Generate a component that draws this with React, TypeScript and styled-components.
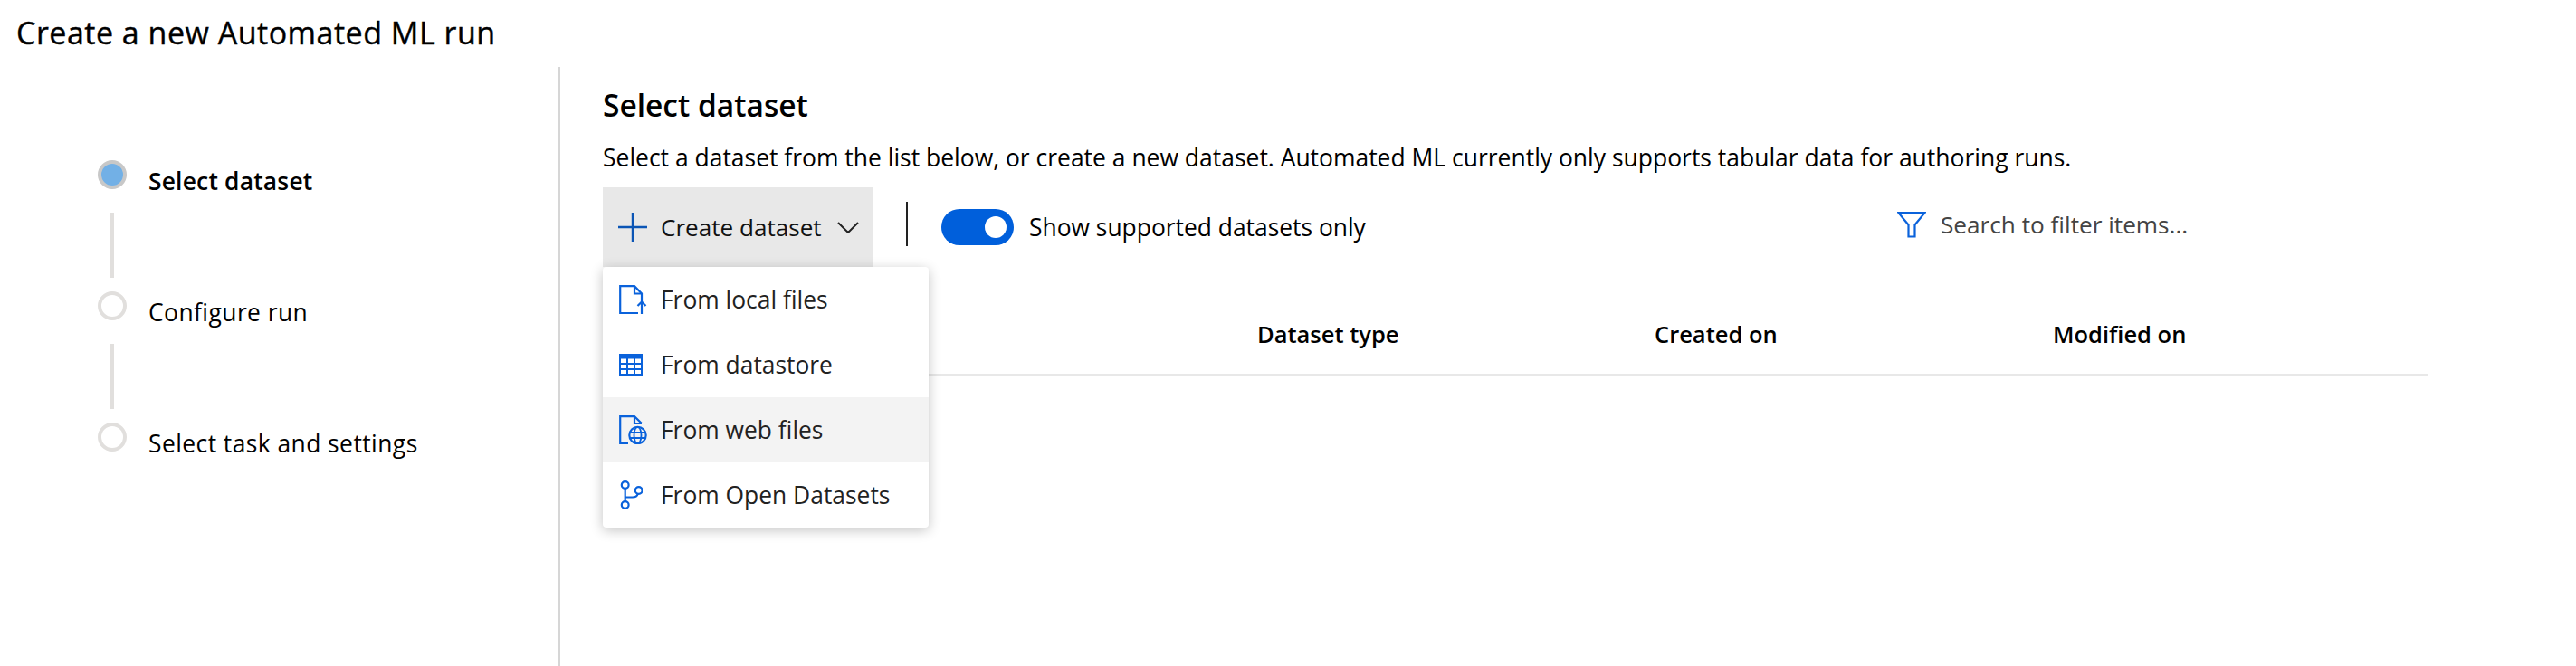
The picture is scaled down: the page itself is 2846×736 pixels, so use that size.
import React from "react";
import styled, { createGlobalStyle } from "styled-components";

const Global = createGlobalStyle`
  html, body { margin: 0; padding: 0; background: #fff; }
  body { font-family: "Open Sans", "Noto Sans", "Liberation Sans", sans-serif; color: #000; }
`;

const Page = styled.div`
  width: 2846px;
  height: 736px;
  overflow: hidden;
  display: flex;
  flex-direction: column;
`;

const TitleBar = styled.h1`
  margin: 0;
  height: 74px;
  padding: 16px 0 0 18px;
  box-sizing: border-box;
  font-size: 34px;
  line-height: 40px;
  font-weight: 400;
  letter-spacing: 0.5px;
  -webkit-text-stroke: 0.4px #000;
`;

const Body = styled.div`
  flex: 1;
  display: flex;
  min-height: 0;
`;

const Sidebar = styled.nav`
  width: 619px;
  box-sizing: border-box;
  border-right: 2px solid #d6d6d6;
  padding: 103px 0 0 108px;
  display: flex;
  flex-direction: column;
`;

const Step = styled.div`
  display: flex;
  align-items: flex-start;
  gap: 24px;
  height: 32px;
`;

const Dot = styled.span<{ $active?: boolean }>`
  flex: none;
  width: 32px;
  height: 32px;
  box-sizing: border-box;
  border-radius: 50%;
  border: 4px solid ${(p) => (p.$active ? "#c8c8c8" : "#e1dfdd")};
  background: ${(p) => (p.$active ? "#72b0e6" : "#fff")};
`;

const StepLabel = styled.span<{ $active?: boolean }>`
  font-size: 26.4px;
  line-height: 36px;
  margin-top: 5px;
  font-weight: ${(p) => (p.$active ? 600 : 400)};
  letter-spacing: ${(p) => (p.$active ? "0.2px" : "0.45px")};
  white-space: nowrap;
`;

const Connector = styled.span`
  display: block;
  width: 4px;
  height: 72px;
  margin: 26px 0 15px 14px;
  background: #e1dfdd;
`;

const Main = styled.main`
  flex: 1;
  padding-left: 47px;
  display: flex;
  flex-direction: column;
  min-width: 0;
`;

const Heading = styled.h2`
  margin: 0;
  font-size: 33.5px;
  line-height: 44px;
  font-weight: 600;
  padding-top: 20px;
`;

const Description = styled.p`
  margin: 0;
  font-size: 26.47px;
  line-height: 36px;
  height: 69px;
  padding-top: 18px;
  box-sizing: border-box;
  white-space: nowrap;
`;

const Toolbar = styled.div`
  display: flex;
  align-items: center;
  height: 88px;
  width: 2017px;
  position: relative;
`;

const CreateWrap = styled.div`
  position: relative;
  height: 88px;
`;

const CreateButton = styled.button`
  height: 88px;
  width: 298px;
  border: 0;
  padding: 0 16px;
  margin: 0;
  background: #e8e8e8;
  display: flex;
  align-items: center;
  font: inherit;
  font-size: 26.1px;
  color: #111;
  svg { flex: none; }
`;

const ButtonText = styled.span`
  margin: 0 17px 0 14px;
  white-space: nowrap;
`;

const Separator = styled.span`
  display: block;
  width: 2px;
  height: 49px;
  margin: -8px 37px 0 37px;
  background: #222;
`;

const ToggleTrack = styled.span`
  flex: none;
  width: 80px;
  height: 40px;
  border-radius: 20px;
  background: #005fdb;
  display: flex;
  align-items: center;
  justify-content: flex-end;
  padding-right: 8px;
  box-sizing: border-box;
`;

const ToggleThumb = styled.span`
  width: 24px;
  height: 24px;
  border-radius: 50%;
  background: #fff;
`;

const ToggleLabel = styled.span`
  margin-left: 17px;
  font-size: 26.4px;
  white-space: nowrap;
`;

const Filter = styled.div`
  position: absolute;
  left: 1430px;
  top: 23px;
  display: flex;
  align-items: center;
  gap: 16px;
  font-size: 26.2px;
  color: #444;
  white-space: nowrap;
`;

const Menu = styled.ul`
  position: absolute;
  z-index: 2;
  left: 0;
  top: 100%;
  margin: 0;
  padding: 0;
  list-style: none;
  width: 360px;
  background: #fff;
  border-radius: 4px;
  box-shadow: 0 3px 14px rgba(0, 0, 0, 0.24);
  overflow: hidden;
`;

const MenuItem = styled.li<{ $hover?: boolean }>`
  height: 72px;
  display: flex;
  align-items: center;
  padding-left: 18px;
  background: ${(p) => (p.$hover ? "#f3f3f3" : "transparent")};
  font-size: 26.4px;
  color: #222;
`;

const MenuIcon = styled.span`
  width: 46px;
  flex: none;
  display: flex;
  align-items: center;
`;

const TableHead = styled.div`
  width: 2017px;
  height: 120px;
  box-sizing: border-box;
  border-bottom: 2px solid #e8e8e8;
  padding: 56px 0 0 723px;
  display: grid;
  grid-template-columns: 439px 440px 1fr;
  font-size: 25.5px;
  line-height: 36px;
  font-weight: 600;
`;

const BLUE = "#0a62db";

const PlusIcon = () => (
  <svg width="34" height="34" viewBox="0 0 34 34" fill="none" stroke="#0b55b5" strokeWidth="2.4">
    <path d="M17 1v32M1 17h32" />
  </svg>
);

const ChevronIcon = () => (
  <svg width="24" height="13" viewBox="0 0 24 13" fill="none" stroke="#222" strokeWidth="2">
    <path d="M1 1l11 11L23 1" />
  </svg>
);

const FilterIcon = () => (
  <svg width="32" height="29" viewBox="0 0 32 29" fill="none" stroke={BLUE} strokeWidth="2.2">
    <path d="M1.5 1.2h29L19.5 14.5v13h-7v-13z" />
  </svg>
);

const UploadFileIcon = () => (
  <svg width="31" height="32" viewBox="0 0 31 32" fill="none" stroke={BLUE} strokeWidth="2.2">
    <path d="M21 31H1.2V1.2H17L25 9.5v9" />
    <path d="M17 1.2V9.5h8" />
    <path d="M25 32V19M20.5 23l4.5-4.5 4.5 4.5" />
  </svg>
);

const TableIcon = () => (
  <svg width="26" height="24" viewBox="0 0 26 24" fill="none" stroke={BLUE} strokeWidth="2">
    <rect x="1" y="1" width="24" height="22" />
    <path d="M1 3.5h24" strokeWidth="4" />
    <path d="M1 11h24M1 17h24M9 5v18M17 5v18" />
  </svg>
);

const WebFileIcon = () => (
  <svg width="31" height="32" viewBox="0 0 31 32" fill="none" stroke={BLUE} strokeWidth="2.2">
    <path d="M10 31H1.2V1.2H17L25 9" />
    <path d="M17 1.2V9h8" />
    <circle cx="20.5" cy="22" r="9.2" />
    <ellipse cx="20.5" cy="22" rx="4" ry="9.2" strokeWidth="1.8" />
    <path d="M11.5 19h18M11.5 25h18" strokeWidth="1.8" />
  </svg>
);

const BranchIcon = () => (
  <svg width="26" height="32" viewBox="0 0 26 32" fill="none" stroke={BLUE} strokeWidth="2.2">
    <circle cx="6.7" cy="5" r="3.9" />
    <circle cx="6.7" cy="27" r="3.9" />
    <circle cx="21.7" cy="11" r="3.9" />
    <path d="M6.7 9v14M6.7 18.5h8c3 0 5.5-1.8 6-3.8" />
  </svg>
);

const steps = ["Select dataset", "Configure run", "Select task and settings"];
const menu = [
  { label: "From local files", icon: <UploadFileIcon /> },
  { label: "From datastore", icon: <TableIcon /> },
  { label: "From web files", icon: <WebFileIcon />, hover: true },
  { label: "From Open Datasets", icon: <BranchIcon /> },
];

export default function App() {
  return (
    <Page>
      <Global />
      <TitleBar>Create a new Automated ML run</TitleBar>
      <Body>
        <Sidebar>
          {steps.map((s, i) => (
            <React.Fragment key={s}>
              <Step>
                <Dot $active={i === 0} />
                <StepLabel $active={i === 0}>{s}</StepLabel>
              </Step>
              {i < steps.length - 1 && <Connector />}
            </React.Fragment>
          ))}
        </Sidebar>
        <Main>
          <Heading>Select dataset</Heading>
          <Description>
            Select a dataset from the list below, or create a new dataset. Automated ML currently only supports tabular data for authoring runs.
          </Description>
          <Toolbar>
            <CreateWrap>
              <CreateButton>
                <PlusIcon />
                <ButtonText>Create dataset</ButtonText>
                <ChevronIcon />
              </CreateButton>
              <Menu>
                {menu.map((m) => (
                  <MenuItem key={m.label} $hover={m.hover}>
                    <MenuIcon>{m.icon}</MenuIcon>
                    {m.label}
                  </MenuItem>
                ))}
              </Menu>
            </CreateWrap>
            <Separator />
            <ToggleTrack>
              <ToggleThumb />
            </ToggleTrack>
            <ToggleLabel>Show supported datasets only</ToggleLabel>
            <Filter>
              <FilterIcon />
              Search to filter items...
            </Filter>
          </Toolbar>
          <TableHead>
            <span>Dataset type</span>
            <span>Created on</span>
            <span>Modified on</span>
          </TableHead>
        </Main>
      </Body>
    </Page>
  );
}
